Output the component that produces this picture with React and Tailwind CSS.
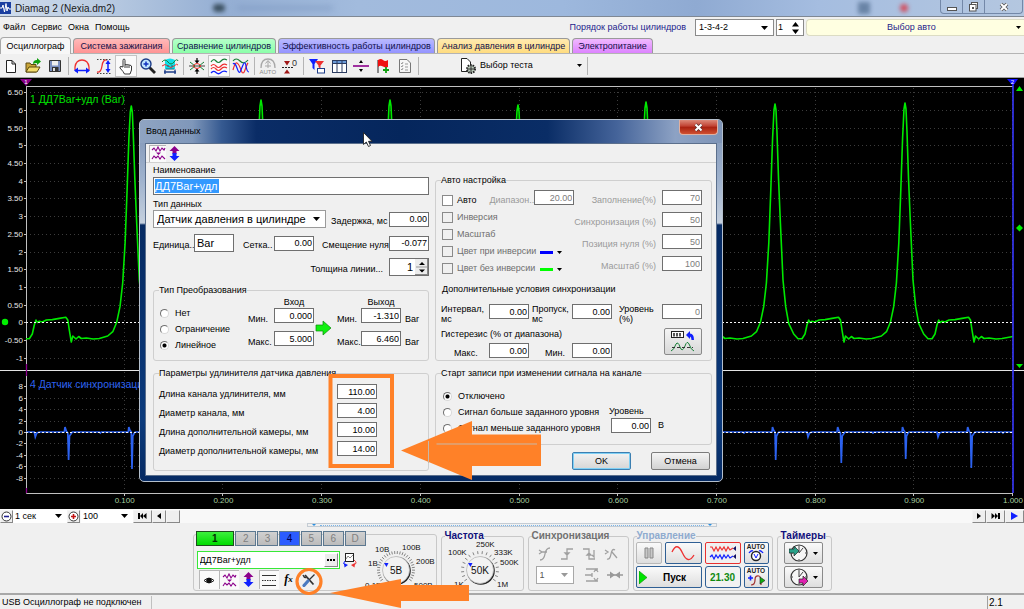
import React from "react";

/* ---------- shared primitives ---------- */

function Svg({ w = 18, h = 18, box, children, className = "" }) {
  return (
    <svg width={w} height={h} viewBox={box || `0 0 ${w} ${h}`} fill="none" className={`shrink-0 ${className}`} aria-hidden="true">
      {children}
    </svg>
  );
}

function Caret({ className = "", fill = "#000" }) {
  return (
    <Svg w={7} h={4} className={className}>
      <path d="M0 0H7L3.5 4Z" fill={fill} />
    </Svg>
  );
}

function Num({ id, value, disabled, label }) {
  return (
    <input
      id={id}
      aria-label={label}
      defaultValue={value}
      disabled={disabled}
      className="h-[15px] w-10 shrink-0 border border-[#6f6f6f] bg-white pr-px text-right text-[9px] leading-[13px] text-black disabled:text-[#7d7d7d]"
    />
  );
}

function Combo({ label, value, className = "", textClass = "", disabled }) {
  return (
    <span className={`relative flex shrink-0 items-center bg-white ${className}`}>
      <select
        aria-label={label}
        disabled={disabled}
        className={`h-full w-full appearance-none bg-transparent pl-[3px] leading-none outline-none ${textClass}`}
      >
        <option>{value}</option>
      </select>
      <Caret className="pointer-events-none absolute right-[5px]" fill={disabled ? "#999" : "#000"} />
    </span>
  );
}

function Tick({ children, disabled, className = "" }) {
  return (
    <label className={`flex items-center gap-1 whitespace-nowrap ${disabled ? "text-[#6e6e6e]" : "text-black"} ${className}`}>
      <input
        type="checkbox"
        disabled={disabled}
        className="h-[11px] w-[11px] shrink-0 appearance-none border border-[#8a8a8a] bg-white disabled:bg-[#f0f0f0]"
      />
      {children}
    </label>
  );
}

function Radio({ name, checked, children }) {
  return (
    <label className="flex h-4 items-center gap-[6px] whitespace-nowrap">
      <input
        type="radio"
        name={name}
        defaultChecked={checked}
        className="h-[9px] w-[9px] shrink-0 appearance-none rounded-full border border-t-[#707070] border-l-[#707070] border-r-[#d8d8d8] border-b-[#d8d8d8] bg-white checked:bg-[radial-gradient(circle,#000_1.5px,#fff_2.5px)]"
      />
      {children}
    </label>
  );
}

/* ---------- title, menu, tabs ---------- */

function TitleBar() {
  return (
    <header className="flex h-[17px] items-center overflow-hidden border-b border-[#7f8894] bg-[linear-gradient(90deg,#cfdcec_0%,#b9cbe2_10%,#94aed3_22%,#a2bbdd_35%,#9db8dd_55%,#8faad2_68%,#a5bde0_80%,#b4c7e0_100%)] text-[10px] text-[#1a1a1a]">
      <Svg w={11} h={12} className="mr-1">
        <rect width="11" height="12" fill="#1b3fa0" />
        <path d="M0 6H2L3 3L4.500 10L6 1.500L7 9L8 5L9 7H11" stroke="#fff" />
      </Svg>
      <h1 className="whitespace-nowrap">Diamag 2 (Nexia.dm2)</h1>
      <span className="ml-[98px] h-2 w-3 rounded-full bg-[#3d5263] blur-[2px]" />
      <span className="ml-3 h-1 w-24 bg-[#6f8bb5] opacity-50 blur-[3px]" />
      <span className="flex-1" />
      <span className="mr-[30px] h-3 w-3 bg-[#4f6b8e] opacity-70 blur-[2px]" />
      <span className="mr-8 h-2 w-2 rounded-full bg-[#d05060] blur-[2px]" />
      <div className="mr-px flex h-[14px] self-start overflow-hidden rounded-b border border-t-0 border-[#7388a8]">
        <button aria-label="Свернуть" className="flex w-[22px] items-center justify-center border-r border-[#7388a8]">
          <Svg w={10} h={10}><rect x=".5" y="5.500" width="9" height="3" fill="#fff" stroke="#555" /></Svg>
        </button>
        <button aria-label="Развернуть" className="flex w-[22px] items-center justify-center border-r border-[#7388a8]">
          <Svg w={10} h={10}>
            <rect x="2.500" y=".5" width="6" height="6" fill="#fff" stroke="#555" />
            <rect x=".5" y="2.500" width="6.500" height="6.500" fill="#fff" stroke="#555" />
            <rect x="3" y="5" width="2" height="2" fill="#555" />
          </Svg>
        </button>
        <button aria-label="Закрыть" className="flex w-[37px] items-center justify-center">
          <Svg w={10} h={10}>
            <path d="M2 2L8 8M8 2L2 8" stroke="#555" strokeWidth="3.600" />
            <path d="M2 2L8 8M8 2L2 8" stroke="#fff" strokeWidth="2" />
          </Svg>
        </button>
      </div>
    </header>
  );
}

function MenuRow() {
  return (
    <div className="flex h-5 items-center pt-px">
      <nav className="flex gap-[6px] pl-[3px]">
        {["Файл", "Сервис", "Окна", "Помощь"].map((m) => (
          <a key={m} href="#" className="text-black">{m}</a>
        ))}
      </nav>
      <span className="flex-1" />
      <span className="mr-[9px] text-[#1c1c8c]">Порядок работы цилиндров</span>
      <Combo label="Порядок работы цилиндров" value="1-3-4-2" className="h-[17px] w-[79px] border border-[#8a8a8a]" />
      <span className="ml-[2px] flex h-[17px] w-7 items-center justify-end gap-[6px] border border-[#8a8a8a] bg-white pr-1">
        <input aria-label="Номер цилиндра" defaultValue="1" className="w-2 bg-transparent" />
        <Svg w={7} h={12}><path d="M0 4.500H7L3.500 0ZM0 7.500H7L3.500 12Z" fill="#000" /></Svg>
      </span>
      <button className="ml-[2px] flex h-[17px] w-[218px] items-center rounded-l border border-r-0 border-[#dcdcc4] bg-[#ffffe1] pr-[3px] text-[#1c1c8c]">
        <span className="flex-1">Выбор авто</span>
        <Svg w={5} h={3}><path d="M0 0H5L2.500 3Z" fill="#000" /></Svg>
      </button>
    </div>
  );
}

const TABS = [
  ["Система зажигания", "w-[97px] bg-[linear-gradient(#ffb9b9,#ff9494)]"],
  ["Сравнение цилиндров", "w-[104px] bg-[linear-gradient(#b5ffc9,#8cffaa)]"],
  ["Эффективность работы цилиндров", "w-[157px] bg-[linear-gradient(#b9b9ff,#9494ff)]"],
  ["Анализ давления в цилиндре", "w-[133px] bg-[linear-gradient(#ffeab0,#ffdc80)]"],
  ["Электропитание", "w-[81px] bg-[linear-gradient(#f0b9ff,#dd84ff)]"],
];

function Tabs() {
  return (
    <div className="flex h-[17px] items-end gap-[2px] border-b border-[#b4b4b4] whitespace-nowrap">
      <button className="-mb-px h-[17px] w-[71px] rounded-t border border-b-0 border-[#a8a8a8] bg-[#f7f7f7]">Осциллограф</button>
      {TABS.map(([t, c]) => (
        <button key={t} className={`h-[15px] rounded-t border border-b-0 border-[#9a9a9a] text-[#10104a] ${c}`}>{t}</button>
      ))}
    </div>
  );
}

/* ---------- main toolbar ---------- */

const RED = "#ee3030";
const BLUE = "#1020ff";
const PUR = "#8b008b";

const ICONS = {
  new: <path d="M4.500 3.500H10L13.500 7V15.500H4.500ZM10 3.500V7H13.500" fill="#fff" stroke="#222" />,
  open: (
    <g>
      <path d="M2 6H6L7 7.500H12V15H2Z" fill="#c9a53a" stroke="#5c4a10" />
      <path d="M2 15L5 10H16L13 15Z" fill="#f4dc6c" stroke="#5c4a10" />
      <path d="M9 7Q9 3 13 3V1L17 4.500L13 8V6Q11 6 9 7Z" fill="#10a010" />
    </g>
  ),
  save: (
    <g>
      <path d="M3.500 3.500H14.500V14.500H3.500Z" fill="#7b8fc0" stroke="#333" />
      <rect x="6" y="4" width="6" height="4.500" fill="#eee" />
      <rect x="6" y="10" width="6.500" height="4.500" fill="#333" />
      <rect x="7" y="11" width="2" height="3" fill="#ddd" />
    </g>
  ),
  period: (
    <g>
      <path d="M2 13V10Q3 3 9 3Q15 3 16 10V13" stroke={RED} strokeWidth="1.300" />
      <path d="M2 13.500H16" stroke={BLUE} strokeWidth="1.500" />
      <path d="M1 13.500L5 10.500V16.500ZM17 13.500L13 10.500V16.500Z" fill={BLUE} />
    </g>
  ),
  ampl: (
    <g>
      <path d="M2 15Q6 16 7 9Q8 2 12 3" stroke={RED} strokeWidth="1.300" />
      <path d="M2 2.500H16M2 16.500H16" stroke="#444" strokeDasharray="1.500 1.500" />
      <path d="M13 5V14" stroke={BLUE} strokeWidth="1.500" />
      <path d="M13 3L10.500 7H15.500ZM13 16L10.500 12H15.500Z" fill={BLUE} />
    </g>
  ),
  hand: (
    <path d="M6 10V3.500Q6 2 7 2Q8 2 8 3.500V8Q9 6.800 10 8Q11 6.800 12 8.300Q13 7.300 14 8.800L14.500 9V13L13 17H7.500L6 14.500L3 11Q2.500 9.500 4 9.500ZM8 8V11M10 8.500V11M12 8.500V11" fill="#fff" stroke="#222" strokeWidth=".9" />
  ),
  zoom: (
    <g>
      <path d="M10.500 10.500L16 16" stroke="#222" strokeWidth="2.800" />
      <circle cx="7" cy="7" r="5" fill="#bfe6ff" stroke="#1c3c88" strokeWidth="1.400" />
      <path d="M4.500 7H9.500M7 4.500V9.500" stroke="#1030c0" strokeWidth="1.500" />
    </g>
  ),
  cut: (
    <g>
      <path d="M4 3Q9 0 14 3V12H4Z" fill="#10dfe8" />
      <path d="M1 5Q4 1 7 5T13 5T17 4" stroke="#188038" />
      <path d="M1 9Q4 6 7 9T13 9T17 8" stroke={RED} />
      <path d="M3 15H15M4 12.500V17M14 12.500V17" stroke="#1c3c88" strokeWidth="1.300" />
      <path d="M5 12H13M7 10V8M11 10V8" stroke="#0a6a80" />
    </g>
  ),
  center: (
    <g>
      <path d="M9 1V5M9 17V13" stroke="#000" strokeWidth="1.200" />
      <path d="M6.500 3.500H11.500L9 6.500ZM6.500 14.500H11.500L9 11.500Z" fill="#000" />
      <path d="M1 9H17" stroke="#444" />
      <path d="M2 5L7 9L2 13M16 5L11 9L16 13" stroke="#188038" />
      <path d="M5 9Q9 4 13 9Q9 14 5 9Z" stroke={RED} />
    </g>
  ),
  waves: (
    <g strokeWidth="1.200">
      <path d="M1 5Q3.500 1 6 4T11 4T17 3" stroke="#188038" />
      <path d="M1 9Q3.500 6 6 9T11 9T17 8M1 12Q3.500 9 6 12T11 12T17 11" stroke={RED} />
      <path d="M1 16Q3.500 13 6 15.500T11 15.500T17 15" stroke={BLUE} />
    </g>
  ),
  overlay: (
    <g strokeWidth="1.200">
      <path d="M1 4Q4 0 8 4T16 3" stroke="#188038" />
      <path d="M1 13Q3 5 5 6T9 13T13 13T16 6" stroke={RED} />
      <path d="M1 7Q3 5 5 11T8 15T11 8T14 9T17 15" stroke={BLUE} />
    </g>
  ),
  auto: (
    <g stroke="#a8a8a8">
      <path d="M2 11Q2 2 9 2Q16 2 16 11" strokeWidth="1.300" />
      <path d="M9 4V11M6.500 6.500L9 3.500L11.500 6.500M6 9H12" />
      <text x="0.500" y="16.500" fontSize="6" fontFamily="Liberation Sans" fill="#888" stroke="none">AUTO</text>
    </g>
  ),
  zero: (
    <g>
      <path d="M1 10.500H12" stroke="#222" strokeDasharray="2 1" />
      <path d="M3 4H9L6 8.500ZM3 16.500H9L6 12.500Z" fill="#a01818" />
      <text x="11" y="9" fontSize="9" fontFamily="Liberation Sans" fill="#333">0</text>
    </g>
  ),
  filter: (
    <g>
      <path d="M1 2H10L6.500 7V13L4.500 11V7Z" fill={BLUE} />
      <path d="M7 4H16L12.500 8.500V12L10.500 10V8.500Z" fill={RED} />
      <rect x="9.500" y="11.500" width="7" height="4.500" fill="#fff" stroke="#1c3c88" />
    </g>
  ),
  table: (
    <g stroke="#2c3c60">
      <rect x="2.500" y="3.500" width="14" height="12" fill="#fff" />
      <rect x="2.500" y="3.500" width="14" height="3" fill="#6a9ad8" />
      <path d="M7 4V15.500M12 4V15.500" />
    </g>
  ),
  split: (
    <g>
      <path d="M1 9H17" stroke={PUR} strokeWidth="1.600" />
      <path d="M7 6H11L9 3ZM7 12H11L9 15Z" fill="#000" />
    </g>
  ),
  flag: (
    <g>
      <path d="M4 3V16" stroke="#222" />
      <path d="M4 3Q7 1 9 3T14 3V10Q12 11 9 9.500T4 10Z" fill="#f01010" />
      <path d="M12 10V16M9 13H15" stroke="#10a010" strokeWidth="1.800" />
    </g>
  ),
  list: (
    <g>
      <path d="M3.500 2.500H11L14.500 6V15.500H3.500Z" fill="#f6f6f6" stroke="#777" />
      <path d="M5 6L6 7L7 5M5 9L6 10L7 8M5 12L6 13L7 11M9 7H12M9 10H12M9 13H12" stroke="#999" />
    </g>
  ),
};

function Tool({ icon, on, label }) {
  return (
    <button
      aria-label={label}
      className={`flex h-[22px] w-[22px] shrink-0 items-center justify-center ${on ? "border border-[#c4c4c4] bg-[#fafafa]" : ""}`}
    >
      <Svg>{ICONS[icon]}</Svg>
    </button>
  );
}

function Sep() {
  return <span className="mx-[2px] h-[18px] w-px shrink-0 bg-[#b4b4b4]" />;
}

function Toolbar() {
  return (
    <div className="flex h-6 items-center border-b border-[#a0a0a0]">
      <Tool icon="new" label="Новый" /><Tool icon="open" label="Открыть" /><Tool icon="save" label="Сохранить" />
      <Sep />
      <Tool icon="period" label="Период" /><Tool icon="ampl" label="Амплитуда" /><Tool icon="hand" on label="Перемещение" />
      <Tool icon="zoom" label="Увеличить" /><Tool icon="cut" label="Вырезать" />
      <Sep />
      <Tool icon="center" label="По центру" /><Tool icon="waves" on label="Раздельно" /><Tool icon="overlay" label="Совместно" />
      <Sep />
      <Tool icon="auto" label="Авто" /><Tool icon="zero" label="Ноль" />
      <Sep />
      <Tool icon="filter" label="Фильтр" /><Tool icon="table" label="Таблица" /><Tool icon="split" label="Разделить" />
      <Tool icon="flag" label="Метка" /><Tool icon="list" label="Отчёт" />
      <Sep />
      <button className="flex h-[22px] w-[164px] items-center pl-[38px] pr-[3px]">
        <Svg w={18} h={18} className="mr-[3px]">
          <path d="M2.500 1.500H8L11.500 5V14.500H2.500Z" fill="#fff" stroke="#222" />
          <circle cx="12" cy="12" r="4" fill="#b9c9b9" stroke="#222" strokeDasharray="1.500 1" strokeWidth="2" />
          <path d="M8 12H16M12 8V16" stroke="#333" />
        </Svg>
        <span className="flex-1 text-left">Выбор теста</span>
        <Svg w={5} h={3}><path d="M0 0H5L2.500 3Z" fill="#000" /></Svg>
      </button>
      <Sep />
    </div>
  );
}

/* ---------- chart ---------- */

const X0 = 26;
const X1 = 1013;
const yTop = (v) => 244.3 - 35.4 * v;
const yLow = (v) => 354 - 5.72 * v;

const SHAPE = [
  [-23.6, 258], [-18.5, 253.7], [-14.6, 244.3], [-11.3, 228.7], [-8.6, 205], [-6.2, 165], [-4.2, 112], [-2.4, 60], [-1, 32],
  [0, 26], [1, 32], [2, 55], [3.5, 100], [5.4, 145], [8, 202], [10.7, 228.7], [13.7, 245.3], [18.7, 256], [23, 260.7], [27, 260.7],
  [30, 256], [32, 247], [33.7, 242], [35, 244.5], [37, 243.3], [40, 244], [44, 242], [50, 241.6], [57, 240.4], [63.5, 239.3], [65.5, 242],
  [67, 252], [69, 264], [70.5, 258], [73.7, 261], [76.4, 258.5], [79, 260.5], [84, 260], [91, 261], [97, 260.5],
];
const PEAKS = [[2.3, 26], [131.3, 28], [261, 22], [390, 22], [518, 27], [646, 24], [775, 26], [905, 25]];
const DEPTHS = [28, 37, 30, 34, 29, 31, 28, 27];

const signal = PEAKS.map(([p, top]) =>
  SHAPE.map(([dx, y]) => `${(p + dx).toFixed(1)} ${(y < 60 ? y + top - 26 : y).toFixed(1)}`).join("L")
).join("L") + "L1016 258";

const pulses = PEAKS.map(([p], i) => {
  const d = DEPTHS[i];
  return `${p - 3} 354L${p - 2.5} 349L${p - 1.5} 352L${p} 354L${p + 0.7} ${354 + d}L${p + 1.5} 358L${p + 3} 355L${p + 4} 354L${p + 32} 354L${p + 33} 359L${p + 34.5} 355L${p + 37} 354L${p + 62} 354L${p + 62.7} 349L${p + 64} 353L${p + 65.5} 355L${p + 66.3} ${382 + ((i * 5) % 9)}L${p + 67.2} 358L${p + 70} 354L${p + 97} 354L${p + 98} 355L${p + 99} 354`;
}).join("L") + "L1016 354";

function Chart() {
  const top = [];
  for (let v = 6.5; v >= -1; v -= 0.5) top.push(v);
  const low = [8, 6, 4, 2, 0, -2, -4, -6, -8];
  const xs = [1, 2, 3, 4, 5, 6, 7, 8, 9, 10];
  return (
    <svg viewBox="0 0 1024 431" className="block w-full bg-black" fontFamily="Liberation Sans" fontSize="8" role="img" aria-label="Осциллограмма">
      <clipPath id="plot"><rect x={X0} y="8" width={X1 - X0} height="407" /></clipPath>
      <g stroke="#3c3c3c" strokeDasharray="1 3">
        {top.map((v) => <path key={v} d={`M${X0} ${Math.round(yTop(v)) + 0.5}H${X1}`} />)}
        {low.map((v) => <path key={v} d={`M${X0} ${Math.round(yLow(v)) + 0.5}H${X1}`} />)}
        {xs.map((k) => <path key={k} d={`M${Math.round(X0 + 98.7 * k) - 0.5} 10V413`} />)}
      </g>
      <path d={`M${X0} 8.500H${X1}M${X0 + 0.5} 8V415.500H${X1}`} stroke="#c0c0c0" fill="none" />
      <path d="M0 292.500H1024" stroke="#e4e4e4" />
      <g fill="#e8e8e8" textAnchor="end">
        {top.map((v) => (
          <text key={v} x="23" y={yTop(v) + 3}>{Number.isInteger(v) ? v : v.toFixed(2)}</text>
        ))}
        {low.map((v) => <text key={v} x="23" y={yLow(v) + 3}>{v}</text>)}
      </g>
      <g stroke="#c0c0c0">
        {top.map((v) => <path key={v} d={`M24 ${Math.round(yTop(v)) + 0.5}H${X0}`} />)}
        {low.map((v) => <path key={v} d={`M24 ${Math.round(yLow(v)) + 0.5}H${X0}`} />)}
        {xs.map((k) => <path key={k} d={`M${Math.round(X0 + 98.7 * k) - 0.5} 415V418`} />)}
      </g>
      <g fill="#a8d0a0" textAnchor="middle">
        {xs.map((k) => <text key={k} x={X0 + 98.7 * k} y="425">{(k / 10).toFixed(3)}</text>)}
      </g>
      <g clipPath="url(#plot)" fill="none">
        <path d={`M${signal}`} stroke="#00e800" strokeWidth="1.600" strokeLinejoin="round" />
        <path d={`M${pulses}`} stroke="#2c62f0" strokeWidth="1.700" />
        <path d="M26 244.500H1013M26 354.500H1013" stroke="#f4f4f4" strokeDasharray="2 2" />
      </g>
      <path d="M1013 6V415" stroke="#3838ff" strokeWidth="1.600" />
      <path d="M26.500 286V298M26.500 410V415" stroke={PUR} strokeWidth="1.300" />
      <path d="M20 1H32L26 8Z" fill={PUR} />
      <path d="M1007 1H1018L1013 8Z" fill="#1010ff" />
      <text x="26" y="6" fontSize="6" fill="#fff" textAnchor="middle">1</text>
      <text x="1012.500" y="6" fontSize="6" fill="#fff" textAnchor="middle">2</text>
      <path d="M1016 13H1023L1019.500 8ZM1016 286H1023L1019.500 290ZM1019.500 146.500L1023 150L1019.500 153.500L1016 150Z" fill="#00f000" />
      <circle cx="5" cy="244" r="3.200" fill="#00f000" />
      <text x="30" y="25" fontSize="10.500" fill="#00e000">1 ДД7Bar+удл (Bar)</text>
      <text x="30" y="310" fontSize="10.500" fill="#2c62f0">4 Датчик синхронизации</text>
    </svg>
  );
}

/* ---------- dialog ---------- */

const ChannelWave = (
  <g stroke={PUR} strokeWidth="1.100">
    <path d="M1 4L3 2L5 5L7 1L9 5L11 2L13 4L14 2M1 13L3 10L5 12L7 10L9 13L11 10L14 13" />
    <path d="M5 6.500H10L7.500 9Z" fill={PUR} stroke="none" />
  </g>
);
const UpDown = (
  <g>
    <path d="M7.500 0L12.500 5H9.500V8H5.500V5H2.500Z" fill={PUR} />
    <path d="M7.500 15L12.500 10H9.500V7H5.500V10H2.500Z" fill={BLUE} />
  </g>
);

function Group({ title, className = "", children }) {
  return (
    <fieldset className={`min-w-0 rounded-[3px] border border-[#cfcfcf] ${className}`}>
      <legend className="ml-[5px] h-3 leading-3 whitespace-nowrap">{title}</legend>
      {children}
    </fieldset>
  );
}

const DIM = "text-[#9a9a9a]";

function LeftColumn() {
  return (
    <div className="flex w-[276px] min-w-0 flex-col">
      <label htmlFor="nm" className="mt-px h-[13px] leading-[13px]">Наименование</label>
      <div className="flex h-[18px] items-center border border-[#6f6f6f] bg-white px-px">
        <input
          id="nm"
          defaultValue="ДД7Bar+удл"
          className="h-[14px] w-16 bg-[#3399ff] text-[11px] text-white outline-none"
        />
      </div>
      <label htmlFor="type" className="mt-[3px] h-3 leading-3">Тип данных</label>
      <div className="flex h-[18px] items-center">
        <Combo
          label="Тип данных"
          value="Датчик давления в цилиндре"
          className="h-[18px] w-[173px] border border-[#9a9a9a]"
          textClass="text-[11px]"
        />
        <label htmlFor="delay" className="ml-[5px] flex-1 whitespace-nowrap pt-1">Задержка, мс</label>
        <Num id="delay" value="0.00" />
      </div>
      <div className="mt-[6px] flex h-[18px] items-center whitespace-nowrap">
        <label htmlFor="unit" className="w-[41px] pt-1">Единица..</label>
        <input id="unit" defaultValue="Bar" className="h-[18px] w-10 border border-[#6f6f6f] bg-white pl-[2px] text-[11px]" />
        <label htmlFor="grid" className="ml-[9px] w-[31px] pt-1">Сетка..</label>
        <Num id="grid" value="0.00" />
        <label htmlFor="shift" className="ml-2 flex-1 pt-1">Смещение нуля</label>
        <Num id="shift" value="-0.077" />
      </div>
      <div className="mt-[6px] flex h-[18px] items-center justify-end">
        <label htmlFor="thick" className="mr-[6px] pt-1">Толщина линии...</label>
        <span className="flex h-[18px] w-10 items-center border border-[#6f6f6f] bg-white">
          <input id="thick" defaultValue="1" className="w-[23px] bg-transparent text-right text-[11px]" />
          <span className="ml-[2px] flex h-full flex-1 items-center justify-center border-r border-b border-[#888] bg-[#ececec]">
            <Svg w={11} h={16}><path d="M3 6H9L6 3ZM3 10.500H9L6 13.500Z" fill="#000" /><path d="M0 8H11" stroke="#999" /></Svg>
          </span>
        </span>
      </div>

      <Group title="Тип Преобразования" className="mt-2 h-[77px]">
        <div className="flex pl-[6px]">
          <div className="w-[88px] pt-[9px]">
            <Radio name="conv">Нет</Radio>
            <Radio name="conv">Ограничение</Radio>
            <Radio name="conv" checked>Линейное</Radio>
          </div>
          <div className="grid grid-cols-[26px_40px] grid-rows-[12px_15px_23px]">
            <span />
            <span className="text-center leading-[13px]">Вход</span>
            <label htmlFor="in1" className="leading-[22px]">Мин.</label><Num id="in1" value="0.000" />
            <label htmlFor="in2" className="mt-2 leading-[22px]">Макс.</label><div className="mt-2"><Num id="in2" value="5.000" /></div>
          </div>
          <Svg w={18} h={16} className="mt-6 ml-[1px]">
            <path d="M1 5H8V1L16 8L8 15V11H1Z" fill="#10f010" stroke="#0a8a0a" strokeWidth=".7" />
          </Svg>
          <div className="ml-1 grid grid-cols-[24px_40px_20px] grid-rows-[12px_15px_23px]">
            <span />
            <span className="text-center leading-[13px]">Выход</span>
            <span />
            <label htmlFor="out1" className="leading-[22px]">Мин.</label><Num id="out1" value="-1.310" />
            <span className="pl-1 leading-[22px]">Bar</span>
            <label htmlFor="out2" className="mt-2 leading-[22px]">Макс.</label><div className="mt-2"><Num id="out2" value="6.460" /></div>
            <span className="mt-2 pl-1 leading-[22px]">Bar</span>
          </div>
        </div>
      </Group>

      <Group title="Параметры удлинителя датчика давления" className="mt-[6px] h-[104px]">
        <div className="mt-[5px] flex flex-col gap-1 pl-[5px]">
          {[
            ["Длина канала удлинителя, мм", "110.00"],
            ["Диаметр канала, мм", "4.00"],
            ["Длина дополнительной камеры, мм", "10.00"],
            ["Диаметр дополнительной камеры, мм", "14.00"],
          ].map(([l, v], i) => (
            <div key={l} className="flex h-[15px] items-center">
              <label htmlFor={`ext${i}`} className="w-[178px] pt-[5px] whitespace-nowrap">{l}</label>
              <Num id={`ext${i}`} value={v} />
            </div>
          ))}
        </div>
      </Group>
    </div>
  );
}

function RightColumn() {
  return (
    <div className="flex w-[277px] min-w-0 flex-col pt-[11px]">
      <Group title="Авто настройка" className="h-[187px]">
        <div className="flex pr-[9px] pl-[6px]">
          <div className="w-[137px] pt-[6px]">
            <div className="flex h-[17px] items-center">
              <Tick className="flex-1">Авто</Tick>
              <label htmlFor="range" className={`${DIM}`}>Диапазон..</label>
              <div className="mb-[6px] flex"><Num id="range" value="20.00" disabled /></div>
            </div>
            <Tick disabled className="h-[17px]">Инверсия</Tick>
            <Tick disabled className="h-[17px]">Масштаб</Tick>
            {[["Цвет при инверсии", "bg-[#0000ff]"], ["Цвет без инверсии", "bg-[#00ff00]"]].map(([t, c]) => (
              <div key={t} className="flex h-[17px] items-center">
                <Tick disabled className="w-[98px]">{t}</Tick>
                <span className={`mt-[2px] h-[3px] w-[13px] ${c}`} />
                <Svg w={5} h={3} className="mt-[2px] ml-1"><path d="M0 0H5L2.500 3Z" fill="#000" /></Svg>
              </div>
            ))}
          </div>
          <div className="flex flex-1 flex-col gap-[7px] pt-[4px]">
            {[["Заполнение(%)", "70"], ["Синхронизация (%)", "50"], ["Позиция нуля (%)", "50"], ["Масштаб (%)", "100"]].map(([l, v], i) => (
              <div key={l} className="flex h-[15px] items-center justify-end">
                <label htmlFor={`auto${i}`} className={`mr-[6px] pt-[5px] whitespace-nowrap ${DIM}`}>{l}</label>
                <Num id={`auto${i}`} value={v} disabled />
              </div>
            ))}
          </div>
        </div>
        <p className="mt-[6px] h-3 pl-[6px] leading-3">Дополнительные условия синхронизации</p>
        <div className="mt-[9px] grid grid-cols-[48px_40px_3px_40px_40px_7px_43px_40px] pl-[5px] leading-[10px]">
          <label htmlFor="intv">Интервал, мс</label><Num id="intv" value="0.00" />
          <span />
          <label htmlFor="skip">Пропуск, мс</label><Num id="skip" value="0.00" />
          <span />
          <label htmlFor="lev">Уровень (%)</label><Num id="lev" value="0" disabled />
        </div>
        <div className="mt-1 flex items-start justify-between pr-[9px] pl-[5px]">
          <div>
            <p className="h-3 leading-3">Гистерезис (% от диапазона)</p>
            <div className="mt-[3px] flex h-[15px] items-center">
              <label htmlFor="hmax" className="w-12 pt-[5px] pl-[13px]">Макс.</label><Num id="hmax" value="0.00" />
              <label htmlFor="hmin" className="w-[43px] pt-[5px] pl-4">Мин.</label><Num id="hmin" value="0.00" />
            </div>
          </div>
          <button aria-label="Измерить" className="flex h-[27px] w-[38px] items-center justify-center rounded-[2px] border border-[#8a8a8a] bg-[linear-gradient(#f4f4f4,#d8d8d8)]">
            <Svg w={28} h={23}>
              <rect x="2.500" y="1.500" width="12" height="6" fill="#fff" stroke="#222" />
              <path d="M5 3V6.500M8 3V6.500M11 3V6.500" stroke="#222" strokeWidth="1.500" />
              <path d="M17 5L21 1V3.500Q25 3.500 25 10H22.500Q22.500 7 21 6.500V9Z" fill={BLUE} />
              <path d="M2 21Q5 20 7 14Q9 11 11 17Q13 23 16 16Q18 10 20 14Q22 20 25 21" stroke="#188038" />
              <path d="M3 17.500H24" stroke="#333" strokeDasharray="3 2" />
            </Svg>
          </button>
        </div>
      </Group>

      <Group title="Старт записи при изменении сигнала на канале" className="mt-[6px] h-[78px]">
        <div className="flex pt-[9px] pl-[7px]">
          <div className="w-[166px]">
            <Radio name="start" checked>Отключено</Radio>
            <Radio name="start">Сигнал больше заданного уровня</Radio>
            <Radio name="start">Сигнал меньше заданного уровня</Radio>
          </div>
          <div className="pt-[17px]">
            <label htmlFor="slev" className="block h-[13px] leading-[13px]">Уровень</label>
            <div className="flex items-center gap-[7px] pl-[2px]"><Num id="slev" value="0.00" /><span>В</span></div>
          </div>
        </div>
      </Group>

      <div className="mt-[7px] flex justify-end gap-5 pr-[2px]">
        <button className="h-[18px] w-[59px] rounded-[2px] border border-[#3c7fb1] bg-[linear-gradient(#f2f2f2,#d6d6d6)] shadow-[inset_0_0_0_1px_#7fd0f5]">OK</button>
        <button className="h-[18px] w-[59px] rounded-[2px] border border-[#7c7c7c] bg-[linear-gradient(#f4f4f4,#d2d2d2)]">Отмена</button>
      </div>
    </div>
  );
}

function Dialog() {
  return (
    <section
      role="dialog"
      aria-label="Ввод данных"
      className="absolute top-[119px] left-[139px] w-[584px] rounded-[5px] border border-[#b4bfcc] bg-[linear-gradient(#7d93b4_0px,#9fb2cd_60px,#c5d0de_103px,#062a62_105px,#0b3a7c_300px,#062a62_100%)] px-[5px] pb-[5px]"
    >
      <div className="-mx-[5px] flex h-[23px] items-center rounded-t bg-[linear-gradient(90deg,#8fa4c2_0%,#7f97ba_9%,#365a91_14%,#0a2c66_20%,#05265c_45%,#0a2d66_70%,#45649a_82%,#8da2c4_92%,#7e94b6_100%)]">
        <h2 className="flex-1 pl-[6px] text-[9px] text-black">Ввод данных</h2>
        <button aria-label="Закрыть окно" className="mr-1 flex h-[15px] w-[39px] items-center justify-center self-start rounded-b border border-t-0 border-[#e0b0a0] bg-[linear-gradient(#dc8a7a,#c04030_45%,#a82010_50%,#d05030)]">
          <Svg w={9} h={9}>
            <path d="M1.500 1.500L7.500 7.500M7.500 1.500L1.500 7.500" stroke="#5a3030" strokeWidth="3.400" />
            <path d="M1.500 1.500L7.500 7.500M7.500 1.500L1.500 7.500" stroke="#fff" strokeWidth="2" />
          </Svg>
        </button>
      </div>
      <div className="border border-[#5b6f8c] bg-[#f0f0f0]">
        <div className="flex h-[19px] items-center border-b border-[#d0d0d0] pl-[3px]">
          <button aria-label="Канал" className="flex h-[17px] w-[17px] items-center justify-center border-l border-t border-[#b4b4b4] bg-[#fafafa]">
            <Svg w={15} h={15}>{ChannelWave}</Svg>
          </button>
          <button aria-label="Смещение" className="flex h-[17px] w-[17px] items-center justify-center"><Svg w={15} h={15}>{UpDown}</Svg></button>
        </div>
        <div className="flex gap-[6px] pb-[4px] pl-[7px]">
          <LeftColumn />
          <RightColumn />
        </div>
      </div>
    </section>
  );
}

/* ---------- scroll strip ---------- */

function StripButton({ label, w = "w-[14px]", children }) {
  return (
    <button aria-label={label} className={`flex h-[13px] items-center justify-center border border-t-[#f4f4f4] border-l-[#f4f4f4] border-r-[#888] border-b-[#888] bg-[#efefef] ${w}`}>
      {children}
    </button>
  );
}

function ScrollStrip() {
  return (
    <div className="flex h-[14px] items-center bg-[#f8f8f8]">
      <StripButton label="Меньше" w="w-[13px]">
        <Svg w={11} h={11}><circle cx="5.500" cy="5.500" r="4.500" stroke="#333" fill="#fff" /><path d="M3 5.500H8" stroke="#202090" strokeWidth="1.600" /></Svg>
      </StripButton>
      <Combo label="Развёртка" value="1 сек" className="h-[13px] w-[54px]" textClass="!pl-[2px]" />
      <StripButton label="Больше" w="w-[13px]">
        <Svg w={11} h={11}><circle cx="5.500" cy="5.500" r="4.500" stroke="#333" fill="#fff" /><path d="M3 5.500H8M5.500 3V8" stroke="#c01010" strokeWidth="1.600" /></Svg>
      </StripButton>
      <Combo label="Масштаб" value="100" className="ml-[1px] h-[13px] w-[52px]" textClass="!pl-[2px]" />
      <StripButton label="В начало" w="w-[19px]"><Svg w={9} h={6}><path d="M0 0H2V6H0ZM5 0V6L2 3ZM8.500 0V6L5 3Z" fill="#000" /></Svg></StripButton>
      <StripButton label="Назад"><Svg w={4} h={6}><path d="M4 0V6L0 3Z" fill="#000" /></Svg></StripButton>
      <StripButton label="Ползунок" />
      <span className="flex-1" />
      <StripButton label="Вперёд"><Svg w={4} h={6}><path d="M0 0V6L4 3Z" fill="#000" /></Svg></StripButton>
      <StripButton label="В конец" w="w-[19px]"><Svg w={9} h={6}><path d="M9 0H7V6H9ZM4 0V6L7 3ZM.5 0V6L4 3Z" fill="#000" /></Svg></StripButton>
      <StripButton label="Следить" w="w-[19px]"><Svg w={7} h={8}><path d="M0 0V8L7 4Z" fill={BLUE} /></Svg></StripButton>
    </div>
  );
}

/* ---------- bottom panel ---------- */

function Panel({ title, tone = "text-[#10107c]", className = "", children }) {
  return (
    <fieldset className={`h-[61px] min-w-0 shrink-0 rounded-[3px] border border-[#c8c8c8] ${className}`}>
      <legend className={`ml-[3px] h-3 text-[10px] leading-3 font-bold whitespace-nowrap ${tone}`}>{title}</legend>
      {children}
    </fieldset>
  );
}

const ticks = (cx, cy, r1, r2, from, to, n) =>
  Array.from({ length: n }, (_, i) => {
    const a = ((from + ((to - from) * i) / (n - 1)) * Math.PI) / 180;
    return `M${(cx + r1 * Math.cos(a)).toFixed(1)} ${(cy + r1 * Math.sin(a)).toFixed(1)}L${(cx + r2 * Math.cos(a)).toFixed(1)} ${(cy + r2 * Math.sin(a)).toFixed(1)}`;
  }).join("");

function Knob({ w, cx, cy, value, marks, n, h = 48 }) {
  return (
    <Svg w={w} h={h} className="overflow-visible">
      <path d={ticks(cx, cy, 16, 19, 145, 395, n)} stroke="#777" strokeWidth=".9" />
      <circle cx={cx + 0.8} cy={cy + 0.8} r="14" fill="#222" />
      <circle cx={cx} cy={cy} r="13.500" fill="#f2f2f2" stroke="#bbb" strokeWidth=".8" />
      <path d={`M${cx - 12} ${cy - 7}L${cx - 7.5} ${cy - 7}L${cx - 9.5} ${cy - 3}Z`} fill={BLUE} />
      <g fontFamily="Liberation Sans" fill="#111">
        <text x={cx} y={cy + 4} fontSize="10" textAnchor="middle">{value}</text>
        {marks.map(([t, x, y]) => <text key={t} x={x} y={y} fontSize="8">{t}</text>)}
      </g>
    </Svg>
  );
}

function ChannelPanel() {
  const iconBtn = "flex h-[19px] w-5 items-center justify-center";
  const pressed = "border-l border-t border-[#b8b8b8] bg-[#fafafa]";
  return (
    <div className="mt-1 flex h-[57px] w-[244px] shrink-0 rounded-[3px] border border-[#c8c8c8]">
      <div className="flex w-[172px] flex-col pl-[2px]">
        <div className="-mt-1 flex h-[15px] gap-px text-[10px] text-[#808080]">
          <button className="w-[39px] border border-[#1d4d1d] bg-[linear-gradient(#3cf03c,#00dc00)] font-bold text-[#003000]">1</button>
          {["2", "3", "4", "5", "6", "D"].map((n) => (
            <button
              key={n}
              className={`w-[21px] border border-[#5c7890] ${n === "4" ? "bg-[#2c5cff] text-[#000050]" : "bg-[linear-gradient(#d0d0d0,#bcbcbc)]"}`}
            >
              {n}
            </button>
          ))}
        </div>
        <div className="mt-[5px] flex items-center">
          <div className="ml-px flex h-[18px] w-[143px] items-center border border-[#38e838] bg-white pr-px pl-[2px]">
            <input aria-label="Имя канала" defaultValue="ДД7Bar+удл" className="min-w-0 flex-1 bg-transparent" />
            <button aria-label="Выбрать" className="flex h-[14px] w-[14px] items-center justify-center border border-t-white border-l-white border-r-[#888] border-b-[#888] bg-[#ececec]">
              <Svg w={8} h={2}><path d="M0 0H2V2H0ZM3 0H5V2H3ZM6 0H8V2H6Z" fill="#000" /></Svg>
            </button>
          </div>
          <Svg w={16} h={16} className="ml-[2px]">
            <rect x="3.500" y="1.500" width="8" height="8" fill="#fff" stroke="#222" />
            <path d="M4 7L6 4L8 6L11 3" stroke="#888" />
            <path d="M3 9Q0 12 3 13" stroke={BLUE} /><path d="M2 11L6 13L2.500 15.500Z" fill={BLUE} />
            <path d="M12 8Q16 11 12 13" stroke={RED} /><path d="M13 11L9 13L12.500 15.500Z" fill={RED} />
          </Svg>
        </div>
        <div className="mt-px flex pl-[3px]">
          <button aria-label="Показать" className={`${iconBtn} ${pressed}`}>
            <Svg w={12} h={9}><path d="M1 4.500Q6 0 11 4.500Q6 9 1 4.500Z" fill="#fff" stroke="#222" /><circle cx="6" cy="4.500" r="2.800" fill="#111" /></Svg>
          </button>
          <button aria-label="Канал" className={`${iconBtn} ${pressed}`}><Svg w={15} h={15}>{ChannelWave}</Svg></button>
          <button aria-label="Смещение" className={iconBtn}><Svg w={15} h={15}>{UpDown}</Svg></button>
          <button aria-label="Линии" className={`${iconBtn} ${pressed}`}>
            <Svg w={14} h={13}><path d="M0 1.500H14M0 11.500H14" stroke="#333" /><path d="M0 6.500H14" stroke="#333" strokeDasharray="1.500 1" /></Svg>
          </button>
          <button aria-label="Функция" className={`${iconBtn} font-['Liberation_Serif',serif] text-[12px] font-bold italic`}>f<span className="text-[9px]">x</span></button>
          <button aria-label="Настройки" className={iconBtn}>
            <Svg w={14} h={14}>
              <path d="M3 2L11.500 11.500" stroke="#333" strokeWidth="1.800" /><path d="M1 2Q2 5 4.500 4.500" stroke="#333" strokeWidth="1.300" />
              <path d="M12.500 1.500L6 8" stroke="#333" strokeWidth="1.200" /><path d="M6 8L2 12.500" stroke="#4a7ac0" strokeWidth="3.200" strokeLinecap="round" />
            </Svg>
          </button>
        </div>
      </div>
      <Knob
        w={70} h={55} cx={30} cy={35} n={30} value="5В"
        marks={[["10В", 9, 17], ["100В", 36, 15], ["1В", 2, 31], ["200В", 50, 29], ["0.1В", -1, 53], ["500В", 48, 53]]}
      />
    </div>
  );
}

const ctl = "flex items-center justify-center rounded-[2px] border bg-[linear-gradient(#fafafa,#dedede)]";

function AutoText() {
  return <text x="11" y="6" fontSize="6.500" fontWeight="bold" fontFamily="Liberation Sans" fill="#222" textAnchor="middle">AUTO</text>;
}

function BottomPanel() {
  return (
    <div className="flex items-start justify-center gap-1 pt-[3px] pb-[2px]">
      <ChannelPanel />
      <Panel title="Частота" className="w-[83px]">
        <Knob
          w={80} cx={38} cy={28} n={18} value="50K"
          marks={[["100K", 6, 13], ["250K", 34, 5], ["333K", 52, 13], ["500K", 58, 23], ["1M", 55, 45], ["1K", 12, 45]]}
        />
      </Panel>
      <Panel title="Синхронизация" tone="text-[#707070]" className="w-[101px]">
        <div className="flex h-[22px] items-center justify-between px-[9px]">
          {[
            "M1 4L4 6L1 8M4 6H9M2 14Q6 14 7 8T12 2",
            "M1 13H7V3H13M7 9L5 7H9Z",
            "M1 3H7V13H13M7 7L5 9H9ZM12 4V11L10 9",
            "M1 4L4 6L1 8M3 13Q6 14 7 8T11 4M8 6L13 12",
          ].map((d) => (
            <button key={d} aria-label="Фронт синхронизации" className="flex"><Svg w={15} h={15}><path d={d} stroke="#a0a0a0" strokeWidth="1.300" /></Svg></button>
          ))}
        </div>
        <div className="mt-[2px] flex items-center pl-[7px]">
          <Combo label="Канал синхронизации" value="1" disabled className="h-[18px] w-[38px] border border-[#a8a8a8]" textClass="text-[#555]" />
          <button aria-label="Уровень" className="ml-[10px]"><Svg w={15} h={14}><path d="M2 1H14M1 7H8M2 13H14M10 4L12 1L14 4M10 10L12 13L14 10M8 5V9" stroke="#a0a0a0" strokeWidth="1.300" /></Svg></button>
          <button aria-label="Сжать" className="ml-2"><Svg w={16} h={14}><path d="M0 7H16" stroke="#999" strokeWidth="1.500" /><path d="M3 3.500L8 7L3 10.500ZM13 3.500L8 7L13 10.500Z" fill="#999" /></Svg></button>
        </div>
      </Panel>
      <Panel title="Управление" tone="text-[#8fabcf]" className="w-[140px]">
        <div className="grid grid-cols-[26px_37px_36px_25px] grid-rows-[22px_22px] gap-x-[3px] gap-y-[2px] pl-[2px]">
          <button aria-label="Пауза" className={`${ctl} border-[#b8b8b8]`}>
            <Svg w={10} h={12}><path d="M1 1H4V11H1ZM6 1H9V11H6Z" fill="#c8c8c8" stroke="#888" /></Svg>
          </button>
          <button aria-label="Синус" className={`${ctl} border-[#2f5f94]`}>
            <Svg w={24} h={16}><path d="M1 7Q6 -4 11.500 8T23 10" stroke={RED} strokeWidth="1.300" /></Svg>
          </button>
          <button aria-label="Запись" className={`${ctl} border-[#e83030] !bg-none`}>
            <Svg w={28} h={16}>
              <path d="M1 2H3L5 6L7 2L9 6L11 2L13 5L15 2L17 6L19 2L21 5L24 3" stroke={RED} strokeWidth="1.200" />
              <path d="M1 12L3 10L5 14L7 10L9 13L11 10L13 14L15 10L17 13L19 10L21 13L24 11" stroke={BLUE} strokeWidth="1.200" />
              <path d="M27 1V6L24 3.500ZM27 9V14L24 11.500Z" fill="#101060" />
            </Svg>
          </button>
          <button aria-label="Автонастройка" className={`${ctl} border-[#2f5f94]`}>
            <Svg w={22} h={20}>
              <AutoText />
              <circle cx="11" cy="13" r="4.500" fill="#fff" stroke="#222" strokeWidth="1.400" />
              <path d="M9 11L11 15L13 11" stroke={BLUE} /><path d="M4 10Q6 7 8 8M18 10Q16 7 14 8" stroke={BLUE} strokeWidth="1.300" />
            </Svg>
          </button>
          <button className={`${ctl} col-span-2 gap-4 border-[#2f5f94] pr-3 text-[10px] font-bold text-black`}>
            <Svg w={8} h={13}><path d="M0 0L8 6.500L0 13Z" fill="#00e400" stroke="#0a8a0a" strokeWidth=".6" /></Svg>
            Пуск
          </button>
          <button className="flex items-center justify-center rounded-[3px] border border-[#2f5f94] bg-[#f2f2f2] text-[10px] font-bold text-[#108a10]">21.30</button>
          <button aria-label="Автопуск" className={`${ctl} border-[#2f5f94]`}>
            <Svg w={22} h={20}>
              <AutoText />
              <path d="M3 11H8M5.500 8.500V13.500" stroke={BLUE} strokeWidth="1.600" />
              <path d="M6 18Q10 18 10 13T14 9Q16 9 16 18" stroke="#a03030" strokeWidth="1.200" />
              <path d="M15 10L20 13.500L15 17Z" fill="#10b010" stroke="#222" strokeWidth=".6" />
            </Svg>
          </button>
        </div>
      </Panel>
      <Panel title="Таймеры" className="w-[55px]">
        <div className="flex flex-col gap-[2px] pl-[6px]">
          {[["Таймер старта", "#28a088", "M0 6H5V3L10 8L5 13V10H0Z"], ["Таймер остановки", "#e020b0", "M10 12H14V9L19 14L14 19V16H10Z"]].map(([l, c, d]) => (
            <button key={l} aria-label={l} className={`${ctl} h-[22px] w-[39px] gap-1 border-[#8a8a8a]`}>
              <Svg w={20} h={20}>
                <circle cx="10" cy="10" r="8" fill="#f6f6f6" stroke="#333" strokeWidth="1.200" />
                <path d="M10 4V10L14 5M10 2.500V4M17.500 10H16M10 16V17.500M2.500 10H4" stroke="#444" />
                <path d={d} fill={c} stroke="#222" strokeWidth=".7" />
              </Svg>
              <Svg w={5} h={3}><path d="M0 0H5L2.500 3Z" fill="#000" /></Svg>
            </button>
          ))}
        </div>
      </Panel>
    </div>
  );
}

/* ---------- callouts drawn over the window ---------- */

function Callouts() {
  return (
    <svg className="pointer-events-none absolute top-0 left-0" width="1024" height="609" viewBox="0 0 1024 609" fill="none" aria-hidden="true">
      <rect x="330.500" y="376" width="61.500" height="90" stroke="#ff8128" strokeWidth="4" />
      <path d="M401 450.500L472 421V434.500H541V466H472V480Z" fill="#ff8128" />
      <path d="M428.500 441V463M436.500 444H537" stroke="#c8b8a8" />
      <path d="M330 593L401 579V585H469V601H401V608Z" fill="#ff8128" />
      <circle cx="309" cy="581.500" r="12" stroke="#ff8128" strokeWidth="3.200" />
      <path d="M363.500 132.500V144.500L366.300 142L368.500 146.500L370.500 145.500L368.500 141.300H372Z" fill="#fff" stroke="#222" strokeWidth=".9" />
    </svg>
  );
}

export default function App() {
  return (
    <div className="relative min-h-screen overflow-hidden bg-[#f0f0f0] font-['Liberation_Sans',Arial,sans-serif] text-[9px] leading-[13px] text-black">
      <TitleBar />
      <MenuRow />
      <Tabs />
      <Toolbar />
      <Chart />
      <ScrollStrip />
      <div className="mx-auto flex h-1 w-[410px] items-center justify-between border border-[#c4ccd4] px-1">
        <Svg w={4} h={2}><path d="M0 0H4L2 2Z" fill="#2c90e0" /></Svg>
        <span className="mx-1 flex-1 border-t border-dotted border-[#78b4e8]" />
        <Svg w={4} h={2}><path d="M0 0H4L2 2Z" fill="#2c90e0" /></Svg>
      </div>
      <BottomPanel />
      <footer className="flex h-4 items-center border-t-2 border-[#a8a8a8]">
        <span className="w-[152px] border-r border-[#c0c0c0] pl-[2px] whitespace-nowrap">USB Осциллограф не подключен</span>
        <span className="flex-1" />
        <span className="w-[37px] border-l border-[#a0a0a0] pl-px text-[10px]">2.1</span>
      </footer>
      <Dialog />
      <Callouts />
    </div>
  );
}
